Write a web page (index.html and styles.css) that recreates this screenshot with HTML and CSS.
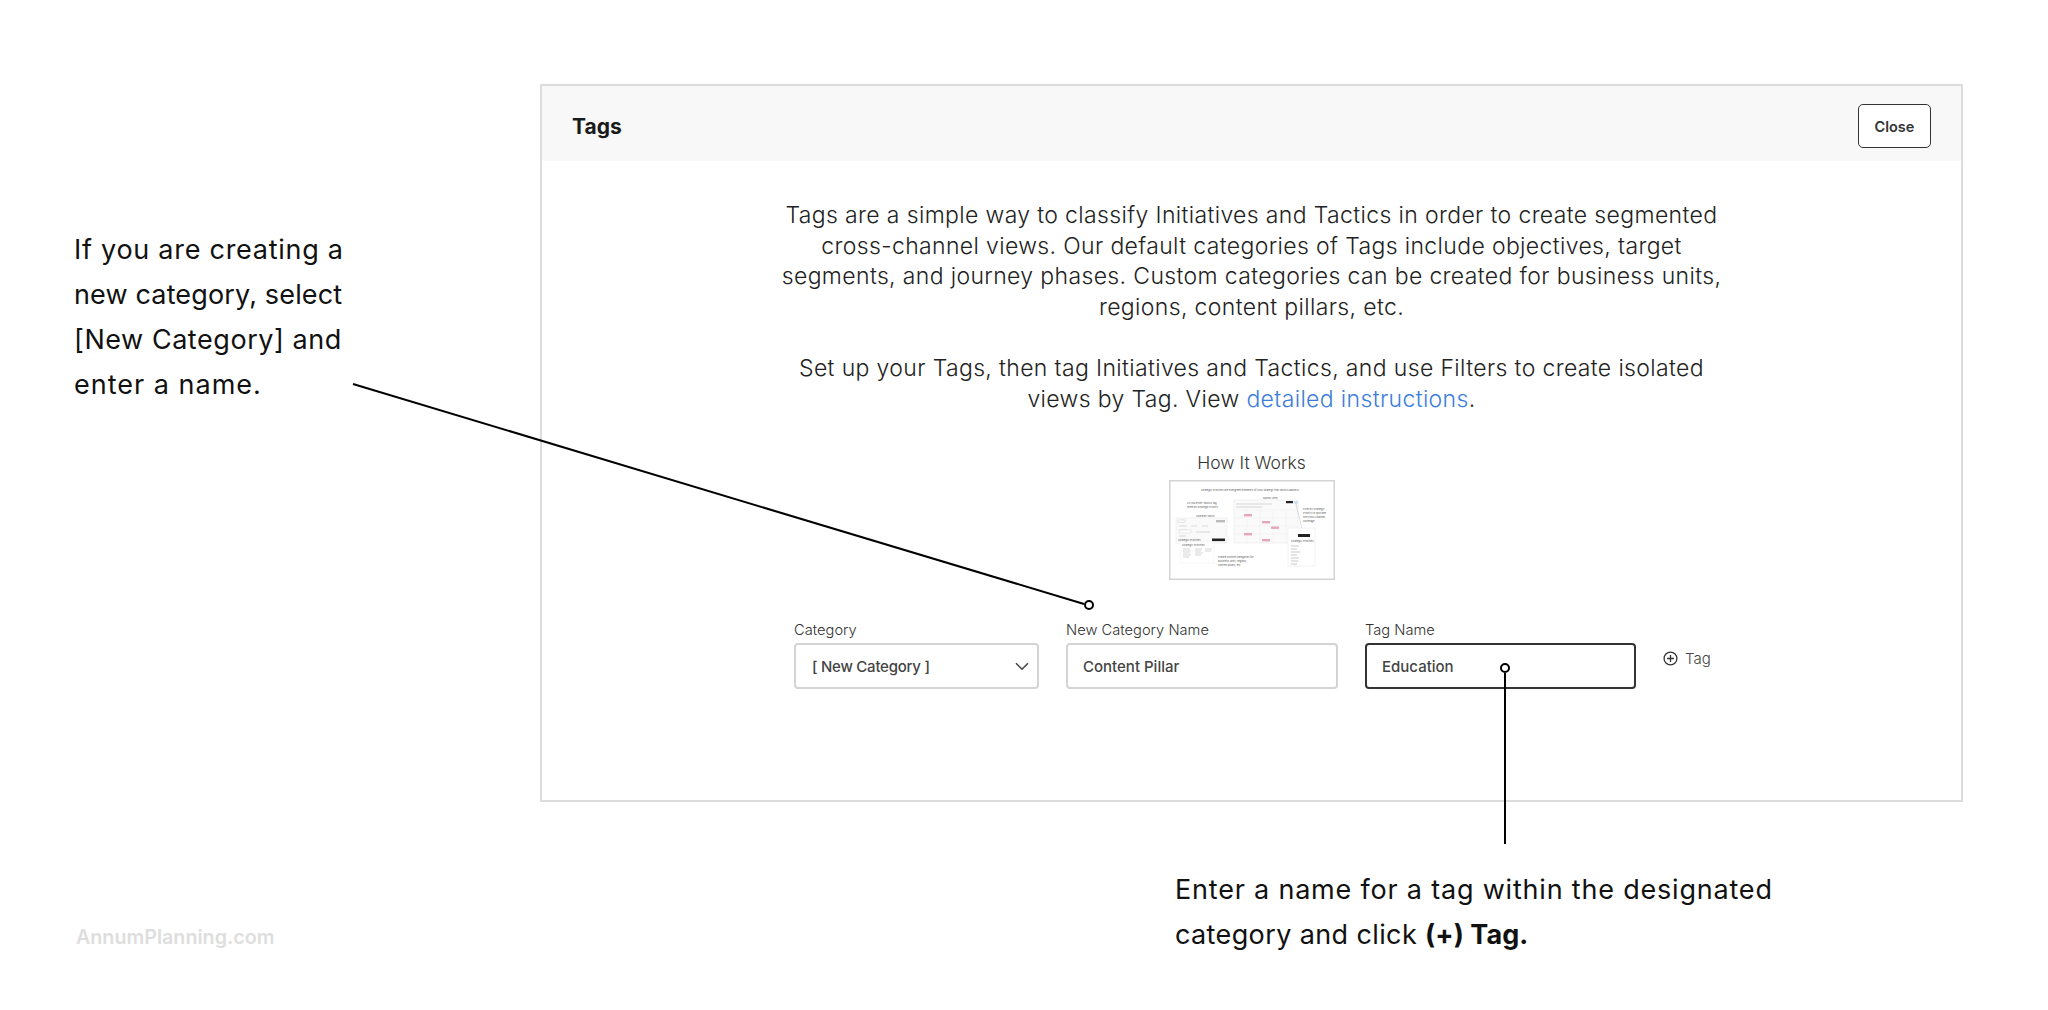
FILE: index.html
```html
<!DOCTYPE html>
<html lang="en">
<head>
<meta charset="utf-8">
<title>Tags</title>
<link rel="stylesheet" href="styles.css">
</head>
<body>
<main class="modal">
  <header class="modal-head">
    <h1 class="modal-title">Tags</h1>
    <button class="close-btn" type="button">Close</button>
  </header>
  <section class="modal-body">
    <p class="intro">Tags are a simple way to classify Initiatives and Tactics in order to create segmented<br>cross-channel views. Our default categories of Tags include objectives, target<br>segments, and journey phases. Custom categories can be created for business units,<br>regions, content pillars, etc.</p>
    <p class="intro intro-second">Set up your Tags, then tag Initiatives and Tactics, and use Filters to create isolated<br>views by Tag. View <a class="link" href="#">detailed instructions</a>.</p>
    <div class="how">
      <div class="how-title">How It Works</div>
      <svg class="thumb" viewBox="0 0 166 100" aria-hidden="true">
        <rect x="0.75" y="0.75" width="164.5" height="98.5" fill="#fff" stroke="#d4d4d4" stroke-width="1.5"/>
        <text class="t" x="32" y="11">Strategic Priorities are evergreen elements of your strategy that Tactics address.</text>
        <text class="t" x="18" y="24">As you enter Tactics tag</text>
        <text class="t" x="18" y="28">them by Strategic Priority.</text>
        <text class="t" x="94" y="19">Month View</text>
        <rect x="65" y="20" width="64" height="43" fill="#fafafa" stroke="#e6e6e6" stroke-width=".5"/>
        <path d="M67 24h36M67 27h26" stroke="#ccc" stroke-width=".8"/>
        <path d="M65 30h64M65 38h64M65 46h64M65 54h64M78 30v33M91 30v33M104 30v33M117 30v33" stroke="#ececec" stroke-width=".4" fill="none"/>
        <rect x="117" y="21" width="7" height="2.2" fill="#222"/>
        <rect x="125" y="21" width="4" height="3" fill="#cfe0ee"/>
        <g fill="#e4a5bd">
          <rect x="75" y="34" width="8" height="2.4"/>
          <rect x="93" y="41" width="8" height="2.4"/>
          <rect x="102" y="46.5" width="8" height="2.4"/>
          <rect x="75" y="53" width="8" height="2.4"/>
          <rect x="93" y="59" width="8" height="2.4"/>
        </g>
        <text class="t" x="134" y="30">Filter by Strategic</text>
        <text class="t" x="134" y="34">Priority to split/see</text>
        <text class="t" x="134" y="38">the cross-channel</text>
        <text class="t" x="134" y="42">coverage.</text>
        <path d="M127 24l6 25" stroke="#bbb" stroke-width=".5"/>
        <rect x="119" y="48" width="27" height="38" fill="#fff" stroke="#e6e6e6" stroke-width=".5"/>
        <rect x="129" y="54" width="12" height="3" fill="#222"/>
        <path d="M122 66h8M122 69h6M122 72h9M122 75h6M122 78h8M122 81h7M122 84h6" stroke="#bbb" stroke-width=".8"/>
        <text class="t" x="122" y="62">Strategic Priorities</text>
        <rect x="7" y="38" width="51" height="25" fill="#fafafa" stroke="#e6e6e6" stroke-width=".5"/>
        <text class="t" x="27" y="37">Add/Edit Tactic</text>
        <rect x="9" y="40" width="7" height="2.4" fill="#fff" stroke="#aaa" stroke-width=".3"/>
        <rect x="47" y="40" width="9" height="2.4" fill="#bbb"/>
        <path d="M10 46h8M22 46h6M33 46h6M10 50h8" stroke="#ccc" stroke-width=".7"/>
        <rect x="10" y="50" width="12" height="3" fill="#fff" stroke="#bbb" stroke-width=".3"/>
        <path d="M27 52h14M10 56h7" stroke="#ccc" stroke-width=".8"/>
        <text class="t" x="9" y="61">Strategic Priorities</text>
        <rect x="43" y="58.5" width="13" height="2.6" fill="#222"/>
        <rect x="11" y="62" width="34" height="21" fill="#fff" stroke="#eee" stroke-width=".5"/>
        <text class="t" x="13" y="66">Strategic Priorities</text>
        <path d="M14 69h7M14 71h8M14 73h7M14 75h8M14 77h6M26 69h7M26 71h6M26 73h8M26 75h6M36 69h7M36 71h6" stroke="#c4c4c4" stroke-width=".7"/>
        <text class="t" x="49" y="78">Create custom categories for</text>
        <text class="t" x="49" y="82">business units, regions,</text>
        <text class="t" x="49" y="86">content pillars, etc.</text>
      </svg>
    </div>
    <form class="tag-form">
      <div class="field field-category">
        <div class="field-label">Category</div>
        <div class="control">
          <span class="select-value">[ New Category ]</span>
          <svg class="chevron" viewBox="0 0 14 9" aria-hidden="true"><path d="M1 1.2l6 6 6-6" fill="none" stroke="#444" stroke-width="1.6"/></svg>
        </div>
      </div>
      <div class="field field-name">
        <div class="field-label">New Category Name</div>
        <div class="control">Content Pillar</div>
      </div>
      <div class="field field-tag">
        <div class="field-label">Tag Name</div>
        <div class="control control-active">Education</div>
      </div>
      <div class="add-tag">
        <svg class="plus" viewBox="0 0 14 14" aria-hidden="true"><circle cx="7" cy="7" r="6" fill="none" stroke="#333" stroke-width="1.2"/><path d="M7 3.8v6.4M3.8 7h6.4" stroke="#333" stroke-width="1.2"/></svg>
        <span>Tag</span>
      </div>
    </form>
  </section>
</main>

<svg class="leaders" viewBox="0 0 2048 1010" aria-hidden="true">
  <path d="M353 384L1084 604" stroke="#000" stroke-width="2" fill="none"/>
  <circle cx="1089" cy="605" r="4" fill="#fff" stroke="#000" stroke-width="2"/>
  <path d="M1505 673V844" stroke="#000" stroke-width="2" fill="none"/>
  <circle cx="1505" cy="668" r="4" fill="#fff" stroke="#000" stroke-width="2"/>
</svg>

<p class="note note-left"><span class="nl nl-1">If you are creating a</span><span class="nl nl-2">new category, select</span><span class="nl nl-3">[New Category] and</span><span class="nl nl-4">enter a name.</span></p>
<p class="note note-bottom"><span class="nl nb-1">Enter a name for a tag within the designated</span><span class="nl nb-2">category and click <strong class="nb-strong">(+) Tag.</strong></span></p>
<div class="brand">AnnumPlanning.com</div>
</body>
</html>
```
FILE: styles.css
```css
* { box-sizing: border-box; }
html, body { margin: 0; padding: 0; }
body {
  position: relative;
  width: 2048px;
  height: 1010px;
  overflow: hidden;
  background: #fff;
  font-family: "Inter", "Noto Sans", sans-serif;
  color: #222;
  padding: 84px 0 0 540px;
}
.modal {
  width: 1423px;
  height: 718px;
  border: 2px solid #dcdcdc;
  display: flex;
  flex-direction: column;
}
.modal-head {
  height: 75px;
  flex: none;
  background: #f8f8f8;
  display: flex;
  align-items: center;
  justify-content: space-between;
  padding: 5px 30px 0;
}
.modal-title {
  margin: 0;
  font-size: 21px;
  font-weight: 700;
  color: #1a1a1a;
}
.close-btn {
  width: 73px;
  height: 44px;
  padding: 0;
  background: #fff;
  border: 1.5px solid #333;
  border-radius: 5px;
  font: 600 14.5px "Inter", sans-serif;
  color: #333;
}
.modal-body {
  flex: 1;
  padding-top: 39px;
  display: flex;
  flex-direction: column;
  align-items: center;
}
.intro {
  margin: 0;
  font-size: 23px;
  font-weight: 300;
  letter-spacing: 0.36px;
  line-height: 30.5px;
  text-align: center;
  white-space: nowrap;
  color: #222;
}
.intro-second { margin-top: 31px; }
.link { color: #3d7edb; text-decoration: none; }
.how {
  margin-top: 39px;
  display: flex;
  flex-direction: column;
  align-items: center;
  gap: 7px;
}
.how-title {
  font-size: 17.5px;
  font-weight: 300;
  line-height: 20px;
  color: #333;
}
.thumb { display: block; width: 166px; height: 100px; }
.t { font-family: "Inter", sans-serif; font-size: 2.6px; fill: #555; }
.tag-form {
  align-self: flex-start;
  margin: 40px 0 0 252px;
  display: flex;
  gap: 27px;
}
.field-label {
  font-size: 14.7px;
  font-weight: 300;
  line-height: 20px;
  margin-bottom: 3px;
  color: #333;
}
.control {
  height: 46px;
  border: 2px solid #d4d4d4;
  border-radius: 4px;
  padding: 0 15px;
  display: flex;
  align-items: center;
  justify-content: space-between;
  font-size: 15px;
  font-weight: 500;
  color: #444;
}
.select-value { margin-left: 1px; letter-spacing: -0.25px; }
.field-category { width: 245px; }
.field-name { width: 272px; }
.field-tag { width: 271px; }
.control-active { border-color: #333; }
.chevron { width: 14px; height: 9px; margin-right: -7px; }
.add-tag {
  height: 26px;
  margin-top: 25px;
  display: flex;
  align-items: center;
  gap: 7px;
  font-size: 15px;
  font-weight: 300;
  color: #444;
}
.plus { width: 15px; height: 15px; }
.leaders {
  position: absolute;
  left: 0;
  top: 0;
  width: 2048px;
  height: 1010px;
  pointer-events: none;
}
.note {
  position: absolute;
  margin: 0;
  font-size: 27px;
  font-weight: 400;
  line-height: 45px;
  color: #111;
  white-space: nowrap;
}
.nl { display: block; }
.note-left { left: 74px; top: 227px; }
.note-bottom { left: 1175px; top: 867px; }
.nl-1 { letter-spacing: 0.73px; }
.nl-2 { letter-spacing: 0.15px; }
.nl-3 { letter-spacing: 0.55px; }
.nl-4 { letter-spacing: 1px; }
.nb-1 { letter-spacing: 0.8px; }
.nb-2 { letter-spacing: 0.38px; }
.nb-strong { letter-spacing: 0.05px; }
.brand {
  position: absolute;
  left: 76px;
  top: 925px;
  font-size: 19.7px;
  font-weight: 600;
  line-height: 24px;
  color: #dedede;
}
```
